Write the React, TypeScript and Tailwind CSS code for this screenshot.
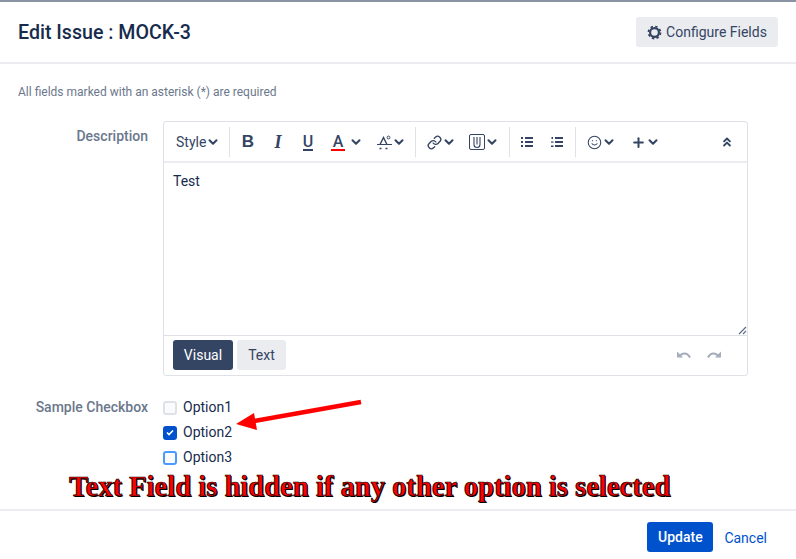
import { ChevronDown, ChevronsUp, Plus, Smile, Link } from 'lucide-react'
import type { ReactNode } from 'react'

function Chevron() {
  return <ChevronDown className="w-[14px] h-[14px] text-[#344563] shrink-0" strokeWidth={3.5} />
}

function Sep() {
  return <div className="w-px h-[30px] bg-[#dfe1e6] shrink-0" />
}

function Tool({ children, className }: { children: ReactNode; className: string }) {
  return <div className={`flex items-center shrink-0 text-[#344563] ${className}`}>{children}</div>
}

function BulletIcon() {
  return (
    <svg width="12" height="12" viewBox="0 0 12 12" fill="#344563">
      <rect x="0" y="1" width="2" height="2" />
      <rect x="0" y="5" width="2" height="2" />
      <rect x="0" y="9" width="2" height="2" />
      <rect x="4" y="1" width="8" height="2" />
      <rect x="4" y="5" width="8" height="2" />
      <rect x="4" y="9" width="8" height="2" />
    </svg>
  )
}

function NumberIcon() {
  return (
    <svg width="12" height="12" viewBox="0 0 12 12" fill="#344563">
      <rect x="0.5" y="1" width="1.5" height="2" />
      <rect x="0" y="5.5" width="2.5" height="1.2" />
      <rect x="0" y="9.5" width="2.5" height="1.5" />
      <rect x="4" y="1" width="8" height="2" />
      <rect x="4" y="5" width="8" height="2" />
      <rect x="4" y="9" width="8" height="2" />
    </svg>
  )
}

function GearIcon() {
  return (
    <svg width="15" height="15" viewBox="0 0 15 15" fill="none" stroke="#344563">
      <circle cx="7.5" cy="7.5" r="4.4" strokeWidth="2.2" />
      <circle cx="7.5" cy="7.5" r="6" strokeWidth="1.8" strokeDasharray="2.4 2.31" />
    </svg>
  )
}

function UndoIcon({ flip }: { flip?: boolean }) {
  return (
    <svg width="14" height="8" viewBox="0 0 14 8" fill="none" className={flip ? '-scale-x-100' : ''}>
      <path d="M0 0.5V6.5H6Z" fill="#a5adba" />
      <path d="M3 4.5C6 1.5 10.5 1.5 13 6.5" stroke="#a5adba" strokeWidth="2" />
    </svg>
  )
}

function Toolbar() {
  return (
    <div className="h-[41px] pt-[1px] flex items-center border-b-2 border-[#ebecf0] text-[#344563]">
      <Tool className="w-[65px] pl-[12px] text-[14px]">
        <span>Style</span>
        <Chevron />
      </Tool>
      <Sep />
      <Tool className="w-[36px] justify-center font-['Liberation_Sans',sans-serif] font-bold text-[17px]">B</Tool>
      <Tool className="w-[24px] justify-center font-['Liberation_Serif',serif] italic font-bold text-[18px]">I</Tool>
      <Tool className="w-[36px] justify-center">
        <span className="text-[16px] font-medium leading-[15px] border-b-2 border-[#344563]">U</span>
      </Tool>
      <Tool className="w-[46px] pl-[5px] gap-[4px]">
        <span className="w-[14px] text-center text-[16px] font-medium leading-[15px] border-b-2 border-[#ff0000]">A</span>
        <Chevron />
      </Tool>
      <Tool className="w-[43px] pl-[5px]">
        <svg width="15" height="15" viewBox="0 0 15 15" fill="none" stroke="#344563" className="shrink-0">
          <path d="M3 9.5l3.5-7L10 9.5" strokeWidth="1.4" />
          <circle cx="11.5" cy="2.5" r="1.4" strokeWidth="1" />
          <path d="M0 9.5h15" strokeWidth="1" />
          <path d="M2.5 13.5h2M8.5 13.5h2" strokeWidth="1.4" />
        </svg>
        <Chevron />
      </Tool>
      <Sep />
      <Tool className="w-[53px] pl-[11px]">
        <Link className="w-[15px] h-[15px] shrink-0" strokeWidth={2.2} />
        <Chevron />
      </Tool>
      <Tool className="w-[40px]">
        <svg width="16" height="16" viewBox="0 0 16 16" fill="none" stroke="#344563" className="shrink-0">
          <rect x="0.5" y="0.5" width="15" height="15" rx="1.5" />
          <path d="M5 3v7.5a3 3 0 0 0 6 0V3M8 3v7.5" strokeWidth="1.1" />
        </svg>
        <Chevron />
      </Tool>
      <Sep />
      <Tool className="w-[30px] pl-[11px]">
        <BulletIcon />
      </Tool>
      <Tool className="w-[35px] pl-[11px]">
        <NumberIcon />
      </Tool>
      <Sep />
      <Tool className="w-[55px] pl-[11px]">
        <Smile className="w-[15px] h-[15px] shrink-0" strokeWidth={1.7} />
        <Chevron />
      </Tool>
      <Tool className="w-[32px]">
        <Plus className="w-[15px] h-[15px] shrink-0" strokeWidth={3.2} />
        <Chevron />
      </Tool>
      <div className="flex-1 flex justify-end pr-[13px]">
        <ChevronsUp className="w-[14px] h-[14px]" strokeWidth={3.2} />
      </div>
    </div>
  )
}

function Check({ label, state }: { label: string; state: 'off' | 'on' | 'focus' }) {
  return (
    <div className="h-[25px] flex items-center gap-[6px] text-[14px] text-[#172b4d]">
      {state === 'on' ? (
        <div className="w-[14px] h-[14px] rounded-[3px] bg-[#0052cc] flex items-center justify-center">
          <svg width="8" height="7" viewBox="0 0 8 7" fill="none" stroke="#fff" strokeWidth="1.6">
            <path d="M1 3.5l2 2 4-4" />
          </svg>
        </div>
      ) : (
        <div
          className={
            state === 'focus'
              ? 'w-[14px] h-[14px] rounded-[3px] bg-[#fafbfc] border-2 border-[#4c9aff]'
              : 'w-[14px] h-[14px] rounded-[3px] bg-[#fafbfc] border-2 border-[#dfe1e6]'
          }
        />
      )}
      <span>{label}</span>
    </div>
  )
}

export default function App() {
  return (
    <div className="relative w-[796px] h-[559px] bg-white border-t-2 border-[#8993a4] font-['Roboto',sans-serif] overflow-hidden">
      <div className="h-[62px] px-[18px] flex items-center justify-between border-b-2 border-[#ebecf0]">
        <h2 className="text-[19.6px] font-medium text-[#172b4d] mt-[2px]">Edit Issue : MOCK-3</h2>
        <button className="h-[30px] w-[142px] bg-[#ebecf0] rounded-[3px] flex items-center justify-center gap-[4px] text-[14px] text-[#344563]">
          <GearIcon />
          Configure Fields
        </button>
      </div>

      <p className="pl-[18px] mt-[20px] text-[12px] leading-[16px] text-[#6b778c]">
        All fields marked with an asterisk (*) are required
      </p>

      <div className="flex mt-[21px]">
        <label className="w-[148px] pt-[5px] text-right text-[14px] font-medium text-[#6b778c]">Description</label>
        <div className="ml-[15px] w-[585px] h-[255px] border border-[#dfe1e6] rounded-[3px] flex flex-col">
          <Toolbar />
          <div className="relative flex-1 px-[9px] py-[8px] text-[14px] leading-[20px] text-[#172b4d] border-b border-[#dfe1e6]">
            Test
            <svg className="absolute right-0 bottom-0" width="9" height="9" viewBox="0 0 9 9" stroke="#5e6c84" strokeWidth="1.2">
              <path d="M1 8l7-7M5 8l3-3" />
            </svg>
          </div>
          <div className="h-[39px] flex items-start pt-[4px] pl-[9px] pr-[26px]">
            <button className="h-[30px] w-[60px] bg-[#344563] text-white rounded-[3px] text-[14px]">Visual</button>
            <button className="ml-[4px] h-[30px] w-[49px] bg-[#ebecf0] text-[#344563] rounded-[3px] text-[14px]">Text</button>
            <div className="ml-auto flex gap-[16px] mt-[11px]">
              <UndoIcon />
              <UndoIcon flip />
            </div>
          </div>
        </div>
      </div>

      <div className="flex mt-[19px]">
        <label className="w-[148px] pt-[2px] text-right text-[14px] font-medium text-[#6b778c]">Sample Checkbox</label>
        <div className="ml-[15px]">
          <Check label="Option1" state="off" />
          <Check label="Option2" state="on" />
          <Check label="Option3" state="focus" />
        </div>
      </div>

      <div className="absolute left-0 right-0 bottom-0 h-[50px] border-t-2 border-[#ebecf0] flex items-center justify-end pr-[29px]">
        <button className="h-[30px] w-[66px] bg-[#0052cc] text-white rounded-[3px] text-[14px] font-medium mt-[4px]">Update</button>
        <span className="ml-[11px] text-[14px] text-[#0052cc] mt-[6px]">Cancel</span>
      </div>

      {/* annotation drawn on top of the screenshot */}
      <div className="absolute left-[69px] top-[469px] font-['Liberation_Serif',serif] font-bold text-[28.6px] leading-[32px] text-[#ff0000] whitespace-nowrap [-webkit-text-stroke:0.7px_#000] [text-shadow:1px_1px_0_#000]">
        Text Field is hidden if any other option is selected
      </div>
      <svg className="absolute left-[230px] top-[390px]" width="135" height="40" viewBox="0 0 135 40">
        <path d="M131 10L24 29" stroke="#ff0000" strokeWidth="4.5" />
        <path d="M6 32L24 21L27 38Z" fill="#ff0000" />
      </svg>
    </div>
  )
}
